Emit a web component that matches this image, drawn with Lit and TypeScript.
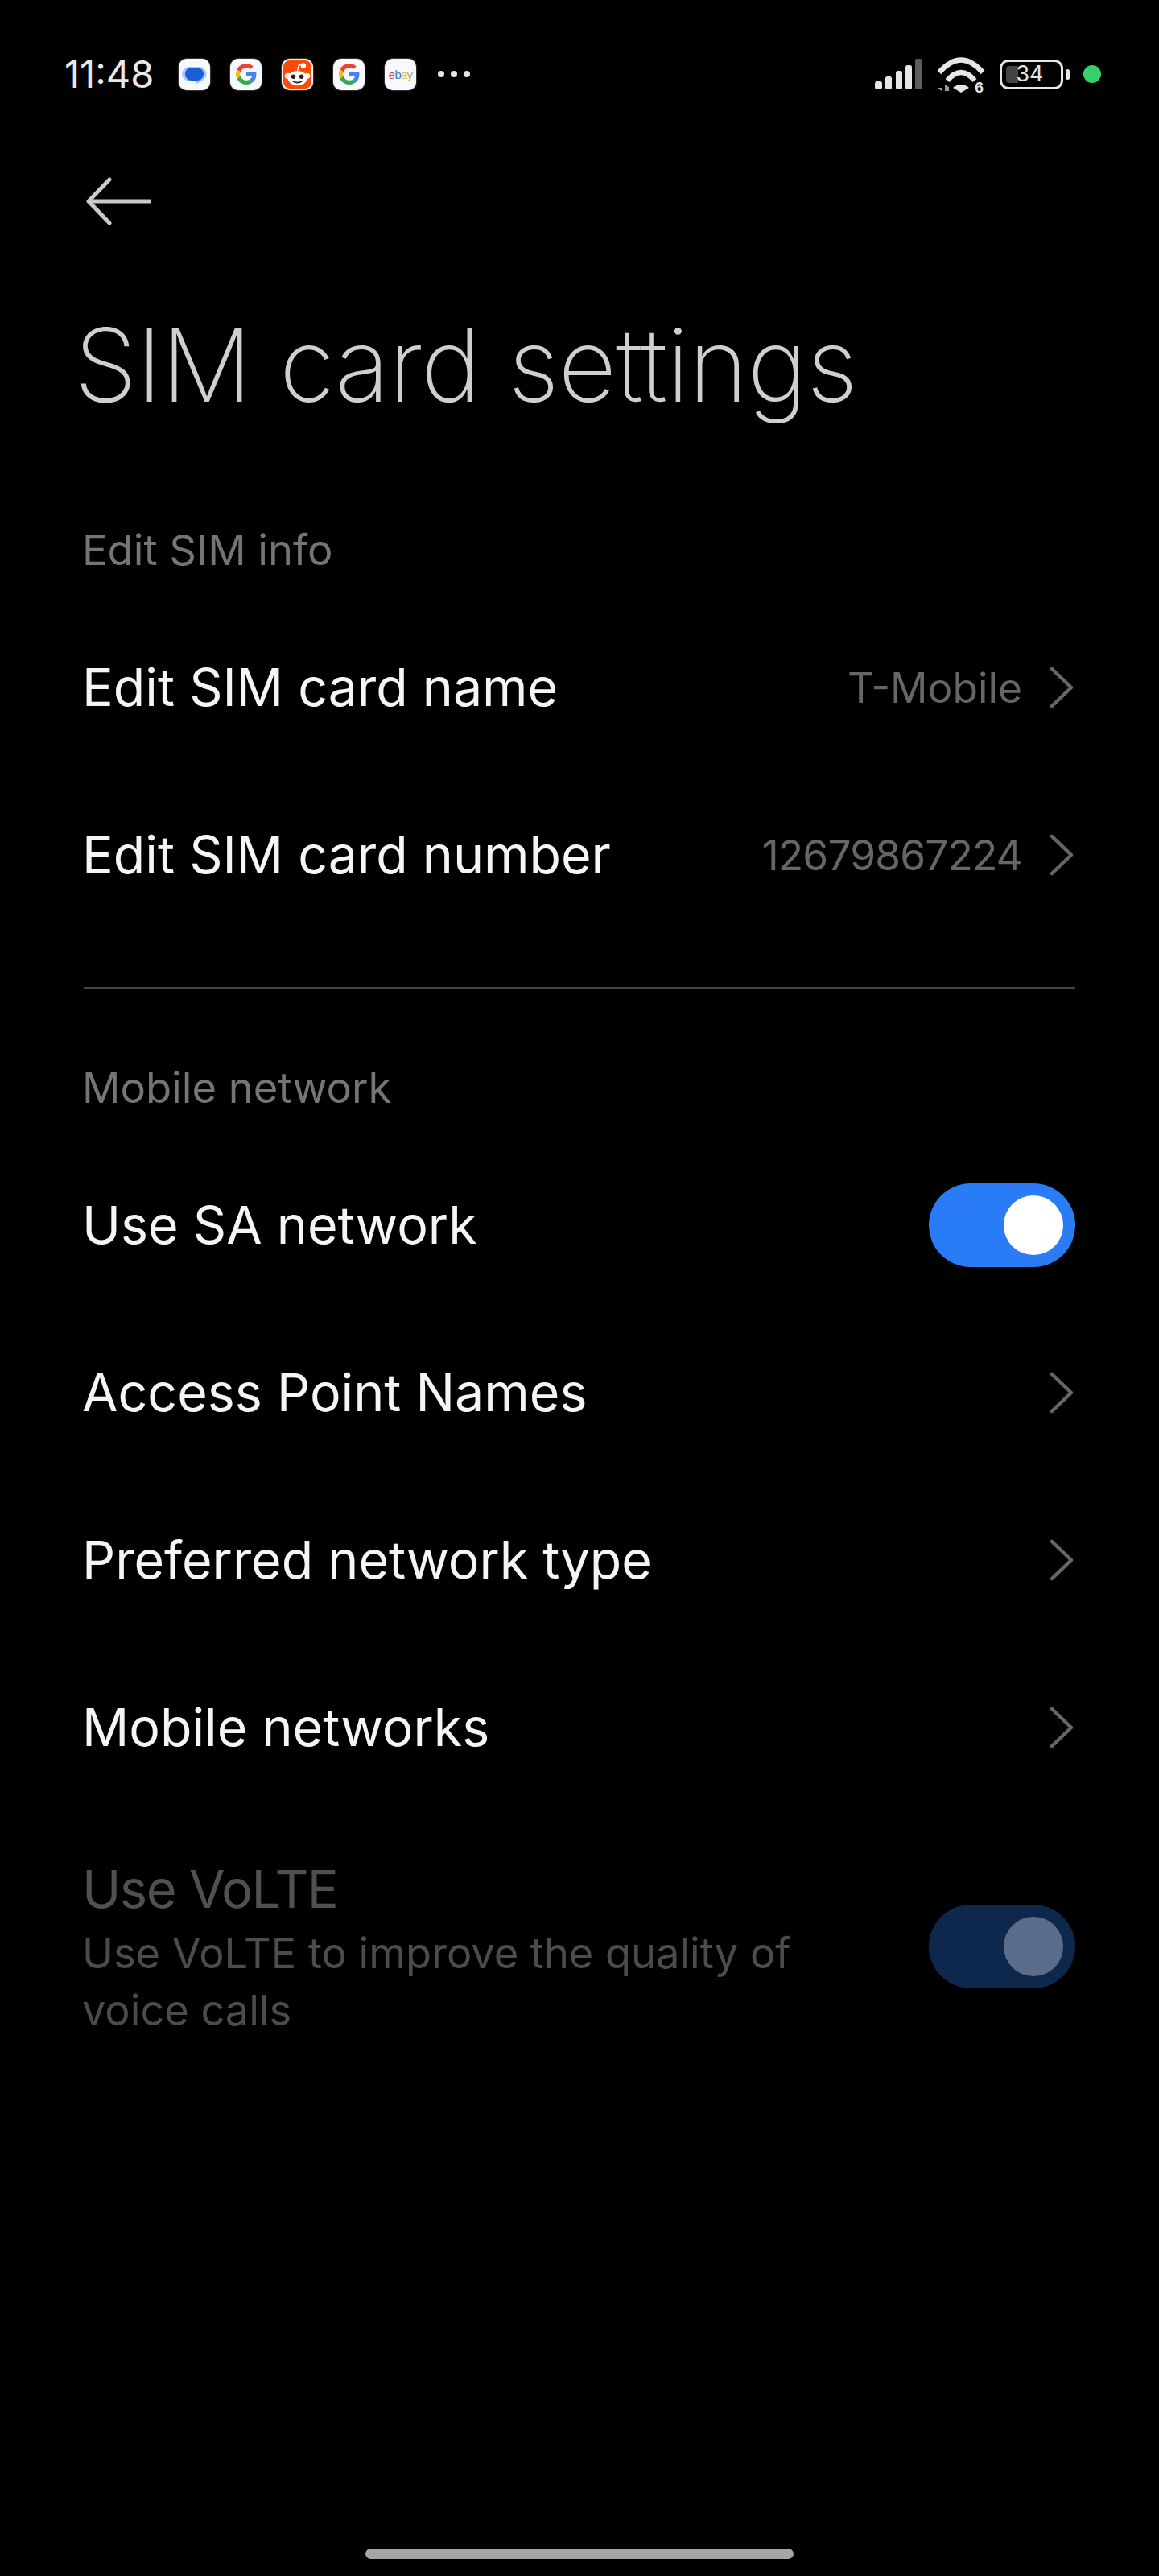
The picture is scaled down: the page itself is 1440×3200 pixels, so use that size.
import { LitElement, html, css, svg } from "lit";
import { customElement } from "lit/decorators.js";

const chevron = html`<svg class="chev" width="32" height="52" viewBox="0 0 32 52"><path d="M3 3 L27 26 L3 49" fill="none" stroke="#666" stroke-width="4.500" stroke-linecap="round" stroke-linejoin="round"/></svg>`;

const gLogo = svg`<path d="M24 9.5c3.54 0 6.71 1.22 9.21 3.6l6.85-6.85C35.9 2.38 30.47 0 24 0 14.62 0 6.51 5.38 2.56 13.22l7.98 6.19C12.43 13.72 17.74 9.5 24 9.5z" fill="#ea4335"/><path d="M46.98 24.55c0-1.57-.15-3.09-.38-4.55H24v9.02h12.94c-.58 2.96-2.26 5.48-4.78 7.18l7.73 6c4.51-4.18 7.09-10.36 7.09-17.65z" fill="#4285f4"/><path d="M10.53 28.59c-.48-1.45-.76-2.99-.76-4.59s.27-3.14.76-4.59l-7.98-6.19C.92 16.46 0 20.12 0 24c0 3.88.92 7.54 2.56 10.78l7.97-6.19z" fill="#fbbc05"/><path d="M24 48c6.48 0 11.93-2.13 15.89-5.81l-7.73-6c-2.15 1.45-4.92 2.3-8.16 2.3-6.26 0-11.57-4.22-13.47-9.91l-7.98 6.19C6.51 42.62 14.62 48 24 48z" fill="#34a853"/>`;

@customElement("app-root")
export class AppRoot extends LitElement {
  static styles = css`
    :host { display: block; width: 1440px; height: 3200px; background: #000; overflow: hidden; font-family: "Inter", "Noto Sans", sans-serif; color: #fff; position: relative; }
    .status { display: flex; align-items: center; height: 60px; padding: 62px 0 0 80px; width: 1288px; }
    .time { font-size: 47px; color: #e9e9e9; width: 142px; line-height: 60px; }
    .apps { display: flex; gap: 25px; align-items: center; }
    .app { width: 39px; height: 39px; border-radius: 10px; background: #f7f9fe; display: flex; align-items: center; justify-content: center; overflow: hidden; box-shadow: 0 0 2px rgba(255,255,255,.7); }
    .app.reddit { background: #fc4b08; border: 2px solid #f7f9fe; box-sizing: border-box; }
    .ebay { font: 400 15px "Liberation Sans", sans-serif; letter-spacing: -0.8px; }
    .e { color: #d9434b; } .b { color: #3f7fd0; } .a { color: #e8b93a; } .y { color: #9bbb3d; }
    .dots { display: flex; gap: 8px; margin-left: 27px; }
    .dots i { width: 8px; height: 8px; border-radius: 50%; background: #e6e6e6; }
    .right { margin-left: auto; display: flex; align-items: center; }
    .wifi { margin-left: 17px; }
    .batt { position: relative; width: 79px; height: 37px; border: 3px solid #e6e6e6; border-radius: 11px; box-sizing: border-box; margin-left: 18px; padding-right: 4px; display: flex; align-items: center; justify-content: center; font-size: 27px; color: #e6e6e6; line-height: 30px; }
    .fill { position: absolute; left: 5px; top: 5px; bottom: 5px; width: 15px; border-radius: 4px 0 0 4px; background: #444; }
    .batt span { position: relative; }
    .nub { width: 5px; height: 13px; background: #e6e6e6; border-radius: 3px; margin-left: 3px; }
    .live { width: 22px; height: 22px; border-radius: 50%; background: #34d36a; margin-left: 17px; }
    .back { display: block; margin: 98px 0 0 104px; }
    h1 { margin: 98px 0 0 92px; font-weight: 200; font-size: 126px; line-height: 150px; color: #cfcfcf; letter-spacing: -1px; white-space: nowrap; }
    .section { padding: 0 104px; width: 1440px; box-sizing: border-box; margin-top: 120px; }
    .cap { font-size: 52.500px; line-height: 70px; color: #757575; margin-left: -2px; }
    .cap.second { margin-top: 87px; }
    .rows { margin-top: 32px; }
    .row { display: flex; align-items: center; justify-content: space-between; height: 208px; font-size: 64.500px; color: #f5f5f5; }
    .row > span:first-child { margin-left: -2px; }
    .val { display: flex; align-items: center; gap: 34px; color: #666; font-size: 51.500px; }
    .num { letter-spacing: -0.9px; }
    .sw { width: 182px; height: 104px; border-radius: 52px; background: #2a7cf6; display: flex; align-items: center; justify-content: flex-end; padding-right: 15px; box-sizing: border-box; flex: none; }
    .sw i { width: 74px; height: 74px; border-radius: 50%; background: #fff; }
    .sw.off { background: #0e274d; margin-bottom: 4px; }
    .sw.off i { background: #5a6c8a; }
    hr { border: 0; height: 3px; background: #444; margin: 60px 0 0; }
    .dis { display: flex; justify-content: space-between; align-items: center; margin-top: 57px; }
    .dis .t { font-size: 65px; line-height: 80px; color: #505050; margin-left: -2px; letter-spacing: -1.5px; }
    .dis .s { font-size: 52.300px; line-height: 71px; width: 900px; color: #4c4c4c; margin: 4px 0 0 -2px; }
    .home { position: absolute; left: 454px; top: 3166px; width: 532px; height: 13px; border-radius: 6.5px; background: #a5a5a5; }
  `;
  render() {
    return html`
      <div class="status">
        <div class="time">11:48</div>
        <div class="apps">
          <div class="app"><svg width="39" height="39" viewBox="0 0 39 39"><path d="M13 10h13a9 9 0 0 1 5 16l-10 6v-4h-8a9 9 0 0 1 0-18z" fill="#a9c7fa"/><rect x="8" y="11" width="23" height="16" rx="8" fill="#1a5fd6"/></svg></div>
          <div class="app"><svg width="26" height="26" viewBox="0 0 48 48">${gLogo}</svg></div>
          <div class="app reddit"><svg width="35" height="35" viewBox="0 0 38 38"><ellipse cx="19" cy="24" rx="13" ry="10" fill="#fff"/><circle cx="6" cy="21" r="4" fill="#fff"/><circle cx="32" cy="21" r="4" fill="#fff"/><circle cx="27" cy="7" r="3.500" fill="#fff"/><path d="M19 14 L21 6 L27 7" stroke="#fff" stroke-width="1.500" fill="none"/><circle cx="13.500" cy="22" r="3" fill="#222"/><circle cx="24.500" cy="22" r="3" fill="#222"/><path d="M13 28q6 4 12 0" stroke="#222" stroke-width="2" fill="none"/></svg></div>
          <div class="app"><svg width="26" height="26" viewBox="0 0 48 48">${gLogo}</svg></div>
          <div class="app"><span class="ebay"><span class="e">e</span><span class="b">b</span><span class="a">a</span><span class="y">y</span></span></div>
        </div>
        <div class="dots"><i></i><i></i><i></i></div>
        <div class="right">
          <svg width="60" height="40" viewBox="0 0 60 40"><g fill="#e6e6e6"><rect x="0" y="29" width="9" height="10" rx="3"/><rect x="13" y="23" width="8" height="16" rx="2.500"/><rect x="26" y="16" width="8" height="23" rx="2.500"/><rect x="38" y="9" width="8" height="30" rx="2.500"/><rect x="50" y="1" width="8" height="38" rx="1.500" fill="#5c5c5c"/></g></svg>
          <svg class="wifi" width="60" height="56" viewBox="0 -8 60 56"><g fill="none" stroke="#e6e6e6" stroke-width="6.500"><path d="M3 18 Q30 -13 57 18"/><path d="M13 28 Q30 8 47 28"/></g><path d="M20 37 Q30 29 40 37 L30 43 Z" fill="#e6e6e6"/><path d="M1 37h6v5zM10 41v-8l5 3v5z" fill="#9a9a9a"/><text x="47" y="43" font-size="17" font-weight="700" font-family="Inter, sans-serif" fill="#e6e6e6">6</text></svg>
          <div class="batt"><div class="fill"></div><span>34</span></div>
          <div class="nub"></div>
          <div class="live"></div>
        </div>
      </div>
      <svg class="back" width="84" height="60" viewBox="0 0 84 60"><path d="M82 30 H6 M32 3 L6 30 L32 57" fill="none" stroke="#cacaca" stroke-width="5" stroke-linecap="round" stroke-linejoin="round"/></svg>
      <h1>SIM card settings</h1>
      <div class="section">
        <div class="cap">Edit SIM info</div>
        <div class="rows">
          <div class="row"><span>Edit SIM card name</span><span class="val">T-Mobile ${chevron}</span></div>
          <div class="row"><span>Edit SIM card number</span><span class="val"><span class="num">12679867224</span> ${chevron}</span></div>
        </div>
        <hr />
        <div class="cap second">Mobile network</div>
        <div class="rows">
          <div class="row"><span>Use SA network</span><div class="sw"><i></i></div></div>
          <div class="row"><span>Access Point Names</span><span class="val">${chevron}</span></div>
          <div class="row"><span>Preferred network type</span><span class="val">${chevron}</span></div>
          <div class="row"><span>Mobile networks</span><span class="val">${chevron}</span></div>
        </div>
        <div class="dis">
          <div><div class="t">Use VoLTE</div><div class="s">Use VoLTE to improve the quality of voice calls</div></div>
          <div class="sw off"><i></i></div>
        </div>
      </div>
      <div class="home"></div>
    `;
  }
}
